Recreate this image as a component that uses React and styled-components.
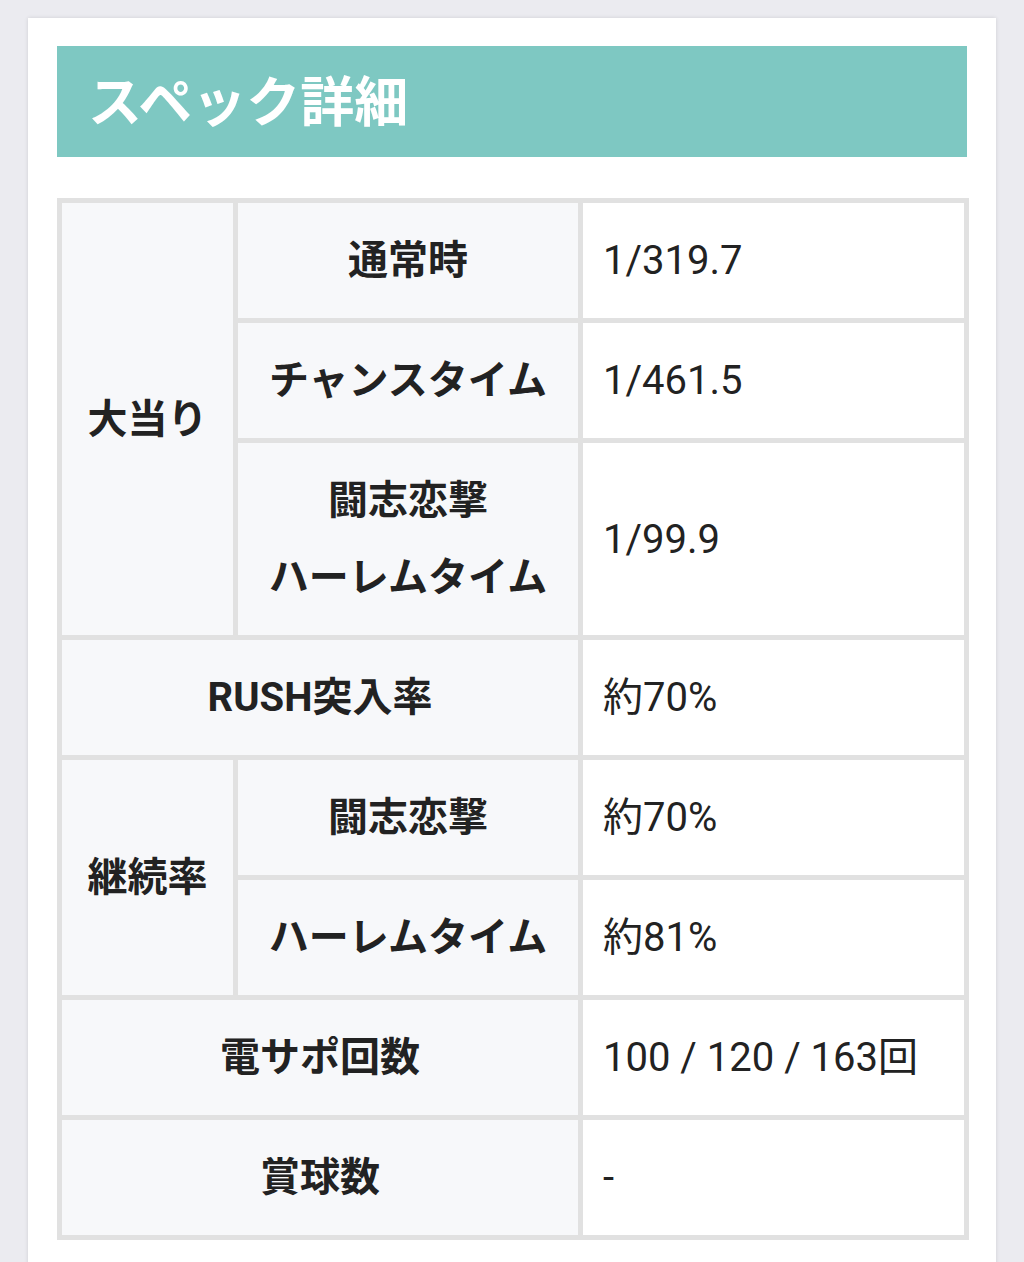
import styled, { createGlobalStyle } from "styled-components";

const GlobalStyle = createGlobalStyle`
  html, body {
    margin: 0;
    padding: 0;
    background: #ebebf0;
  }
  body {
    font-family: Roboto, "Noto Sans CJK JP", sans-serif;
    color: #222;
  }
`;

const Page = styled.div`
  padding: 18px 28px 0;
  min-height: 1262px;
  box-sizing: border-box;
`;

const Card = styled.section`
  background: #fff;
  box-shadow: 0 0 4px rgba(0, 0, 0, 0.12);
  padding: 28px 29px 40px;
  min-height: 1244px;
  box-sizing: border-box;
`;

const Heading = styled.h2`
  margin: 0 0 41px;
  height: 111px;
  display: flex;
  align-items: center;
  padding: 0 0 7px 31px;
  box-sizing: border-box;
  background: #7ec8c2;
  color: #fff;
  font-family: "Noto Sans CJK JP", sans-serif;
  font-size: 54px;
  font-weight: 700;
`;

const Table = styled.table`
  width: 907px;
  table-layout: fixed;
  border-collapse: collapse;
  font-size: 40px;
`;

const Th = styled.th`
  border: 5px solid #e1e1e1;
  background: #f7f8fa;
  font-weight: 700;
  line-height: 77px;
  padding: 19px 6px 19px;
  text-align: center;
  color: #222;
`;

const Td = styled.td`
  border: 5px solid #e1e1e1;
  background: #fff;
  line-height: 77px;
  padding: 19px 10px 19px 20px;
  text-align: left;
  color: #222;
  white-space: nowrap;
`;

const rows = [
  { group: "大当り", span: 3, label: "通常時", value: "1/319.7" },
  { label: "チャンスタイム", value: "1/461.5" },
  { label: ["闘志恋撃", "ハーレムタイム"], value: "1/99.9" },
  { wide: "RUSH突入率", value: "約70%" },
  { group: "継続率", span: 2, label: "闘志恋撃", value: "約70%" },
  { label: "ハーレムタイム", value: "約81%" },
  { wide: "電サポ回数", value: "100 / 120 / 163回" },
  { wide: "賞球数", value: "-" },
];

const Label = ({ text }) =>
  Array.isArray(text) ? (
    <>
      {text[0]}
      <br />
      {text[1]}
    </>
  ) : (
    text
  );

export default function App() {
  return (
    <>
      <GlobalStyle />
      <Page>
        <Card>
          <Heading>スペック詳細</Heading>
          <Table>
            <colgroup>
              <col style={{ width: 176 }} />
              <col style={{ width: 345 }} />
              <col style={{ width: 386 }} />
            </colgroup>
            <tbody>
              {rows.map((r, i) => (
                <tr key={i}>
                  {r.wide ? (
                    <Th colSpan={2}>{r.wide}</Th>
                  ) : (
                    <>
                      {r.group && <Th rowSpan={r.span}>{r.group}</Th>}
                      <Th>
                        <Label text={r.label} />
                      </Th>
                    </>
                  )}
                  <Td>{r.value}</Td>
                </tr>
              ))}
            </tbody>
          </Table>
        </Card>
      </Page>
    </>
  );
}
